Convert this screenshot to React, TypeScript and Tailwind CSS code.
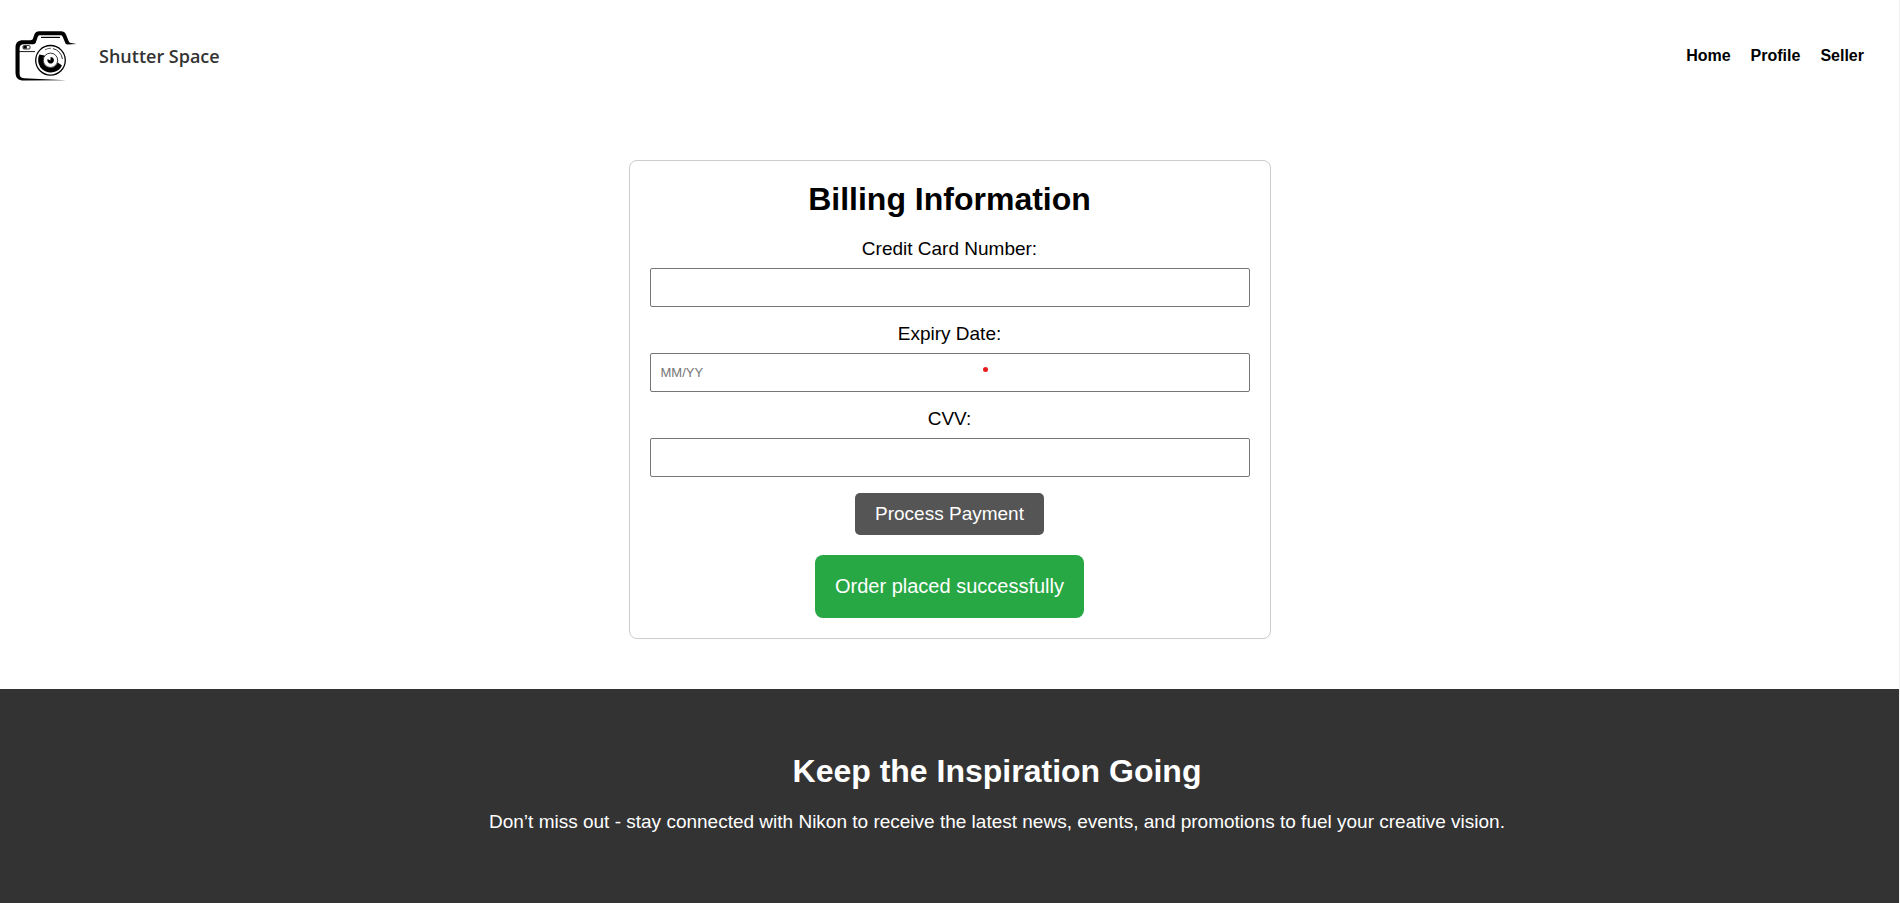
import type { ReactNode } from "react";

const navLinks = ["Home", "Profile", "Seller"];

function CameraLogo() {
  return (
    <svg viewBox="0 0 62 50" className="h-[50px] w-[62px]" aria-hidden="true">
      <path
        d="M0.5 16.5 C0.5 11.6 3.2 9.2 8 9.2 L15.4 9.2 C16.8 9.2 17.6 8.8 18 7.6 L19.4 3.6 C20.3 1.2 21.8 0.3 24.2 0.3 L46 0.3 C48.4 0.3 50 1.2 51 3.6 L53.6 10 C54.1 11.4 54.8 11.8 56 12 L61.5 13 L52.4 13.5 C51.2 13.5 50.6 13 50.2 11.8 L47.8 6 C47.2 4.6 46.6 4.2 45.2 4.2 L25.4 4.2 C24 4.2 23.2 4.6 22.7 6 L21 11 C20.5 12.6 19.8 13.2 18 13.2 L9 13.2 C6 13.2 4.6 14.6 4.6 17.6 L4.6 42.5 C4.6 45.6 5.8 47 9 47.2 L51 49.2 L9 49.6 C3.2 49.6 0.5 46.8 0.5 41.5 Z"
        fill="#000"
      />
      <path d="M26 6.4 H45" stroke="#000" strokeWidth="1.2" />
      <path d="M4 20.6 H20" stroke="#000" strokeWidth="0.9" />
      <rect x="8" y="14.6" width="7" height="3.4" rx="1" fill="#fff" stroke="#000" strokeWidth="0.8" />
      <rect x="8.4" y="15" width="3.4" height="2.6" fill="#000" />
      <circle cx="35.5" cy="29.3" r="14.8" fill="#fff" stroke="#000" strokeWidth="1.3" />
      <path
        d="M24.4 23.6 L29.6 24.4 A7.6 7.6 0 1 0 42.8 31.4 L47 34.4 A12.4 12.4 0 1 1 24.4 23.6 Z"
        fill="#000"
      />
      <path d="M38 17.6 A12 12 0 0 1 47.4 28" fill="none" stroke="#000" strokeWidth="0.8" />
      <path d="M30 18.8 A12 12 0 0 1 36 17.2" fill="none" stroke="#000" strokeWidth="0.6" />
      <circle cx="35.5" cy="29.3" r="7.2" fill="#fff" stroke="#000" strokeWidth="0.8" />
      <path d="M35.6 26 A3.3 3.3 0 1 1 32.6 28 L35.4 29.6 Z" fill="#000" />
    </svg>
  );
}

type FieldProps = { id: string; label: string; placeholder?: string; children?: ReactNode };

function Field({ id, label, placeholder, children }: FieldProps) {
  return (
    <div className="mb-4 flex flex-col items-center gap-2">
      <label htmlFor={id} className="text-[19px] leading-[22px]">
        {label}
      </label>
      <div className="relative w-full">
        <input
          id={id}
          type="text"
          placeholder={placeholder}
          className="block h-[39px] w-full rounded-xs border border-[#767676] bg-white px-2.5 text-[13px] placeholder:text-[#757575]"
        />
        {children}
      </div>
    </div>
  );
}

export default function App() {
  return (
    <div className="flex min-h-screen flex-col border-r border-[#f0f0f0] bg-white font-['Liberation_Sans',Arial,sans-serif] text-black">
      <header className="flex h-28 items-center justify-between pr-[35px] pl-[15px]">
        <a href="#" className="flex items-center gap-[22px]">
          <CameraLogo />
          <span className="font-['Open_Sans',sans-serif] text-[18px] font-semibold text-[#333]">Shutter Space</span>
        </a>
        <nav className="flex gap-5">
          {navLinks.map((link) => (
            <a key={link} href="#" className="text-base font-bold">
              {link}
            </a>
          ))}
        </nav>
      </header>

      <main className="mt-12 mb-[50px] px-5">
        <form
          className="mx-auto flex max-w-[642px] flex-col rounded-lg border border-[#ccc] p-5"
          onSubmit={(event) => event.preventDefault()}
        >
          <h1 className="mb-5 text-center text-[32px] leading-[37px] font-bold">Billing Information</h1>
          <Field id="card-number" label="Credit Card Number:" />
          <Field id="expiry-date" label="Expiry Date:" placeholder="MM/YY">
            <span className="absolute top-3.5 left-[333px] size-[5px] rounded-full bg-[#e81b1f]" />
          </Field>
          <Field id="cvv" label="CVV:" />
          <button type="submit" className="mb-5 self-center rounded-[5px] bg-[#555] px-5 py-2.5 text-[19px] leading-[22px] text-white">
            Process Payment
          </button>
          <p role="status" className="self-center rounded-lg bg-[#28a745] p-5 text-[20px] leading-[23px] text-white">
            Order placed successfully
          </p>
        </form>
      </main>

      <footer className="flex grow flex-col items-center gap-[21px] bg-[#333] pt-16 pl-[5%] text-center text-white">
        <h2 className="text-[32px] leading-[37px] font-bold">Keep the Inspiration Going</h2>
        <p className="text-[19px] leading-[22px]">
          Don’t miss out - stay connected with Nikon to receive the latest news, events, and promotions to fuel your creative vision.
        </p>
      </footer>
    </div>
  );
}
